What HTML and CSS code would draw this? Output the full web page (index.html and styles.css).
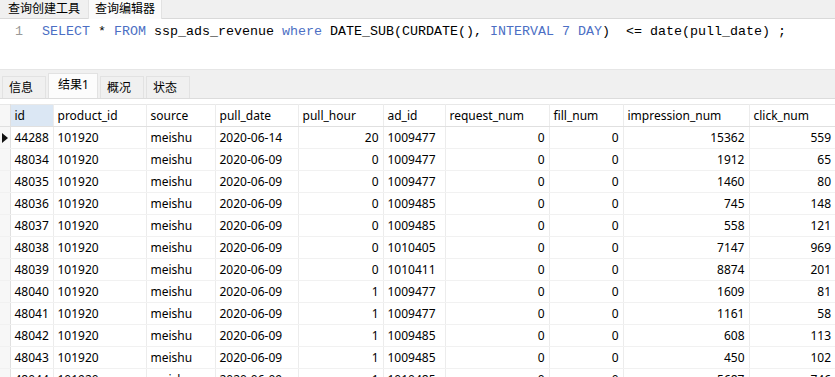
FILE: index.html
```html
<!DOCTYPE html>
<html lang="zh-CN">
<head>
  <meta charset="UTF-8" />
  <title>查询编辑器</title>
  <link rel="stylesheet" href="styles.css">
</head>
<body>

  <!-- top tabs -->
  <div class="top-tabs">
    <div class="tab">查询创建工具</div>
    <div class="tab active">查询编辑器</div>
  </div>

  <!-- SQL editor -->
  <div class="editor">
    <span class="line-no">1</span>
    <span class="code"><span class="kw">SELECT</span> * <span class="kw">FROM</span> ssp_ads_revenue <span class="kw">where</span> DATE_SUB(CURDATE(), <span class="kw">INTERVAL</span> <span class="kw">7</span> <span class="kw">DAY</span>)  &lt;= date(pull_date) ;</span>
  </div>

  <!-- result tabs -->
  <div class="result-tabs">
    <div class="rtab">信息</div>
    <div class="rtab active">结果1</div>
    <div class="rtab">概况</div>
    <div class="rtab">状态</div>
  </div>

  <div class="grid-wrap">
    <table class="grid">
      <colgroup>
        <col style="width:10px">
        <col style="width:43px">
        <col style="width:93px">
        <col style="width:69px">
        <col style="width:83px">
        <col style="width:85px">
        <col style="width:62px">
        <col style="width:104px">
        <col style="width:74px">
        <col style="width:126px">
        <col style="width:86px">
      </colgroup>
      <thead>
        <tr>
          <th class="ind"></th>
          <th class="sel">id</th>
          <th>product_id</th>
          <th>source</th>
          <th>pull_date</th>
          <th>pull_hour</th>
          <th>ad_id</th>
          <th>request_num</th>
          <th>fill_num</th>
          <th>impression_num</th>
          <th>click_num</th>
        </tr>
      </thead>
      <tbody id="rows"></tbody>
    </table>
  </div>

  <script>
    const data = [
      ['44288', '2020-06-14', 20, '1009477', 15362, 559],
      ['48034', '2020-06-09', 0, '1009477', 1912, 65],
      ['48035', '2020-06-09', 0, '1009477', 1460, 80],
      ['48036', '2020-06-09', 0, '1009485', 745, 148],
      ['48037', '2020-06-09', 0, '1009485', 558, 121],
      ['48038', '2020-06-09', 0, '1010405', 7147, 969],
      ['48039', '2020-06-09', 0, '1010411', 8874, 201],
      ['48040', '2020-06-09', 1, '1009477', 1609, 81],
      ['48041', '2020-06-09', 1, '1009477', 1161, 58],
      ['48042', '2020-06-09', 1, '1009485', 608, 113],
      ['48043', '2020-06-09', 1, '1009485', 450, 102],
      ['48044', '2020-06-09', 1, '1010485', 5687, 746]
    ];

    const tbody = document.getElementById('rows');
    data.forEach((r, i) => {
      const tr = document.createElement('tr');
      tr.innerHTML =
        '<td class="ind">' + (i === 0 ? '<span class="arrow"></span>' : '') + '</td>' +
        '<td>' + r[0] + '</td>' +
        '<td>101920</td>' +
        '<td>meishu</td>' +
        '<td>' + r[1] + '</td>' +
        '<td class="num">' + r[2] + '</td>' +
        '<td>' + r[3] + '</td>' +
        '<td class="num">0</td>' +
        '<td class="num">0</td>' +
        '<td class="num">' + r[4] + '</td>' +
        '<td class="num">' + r[5] + '</td>';
      tbody.appendChild(tr);
    });
  </script>

</body>
</html>
```

FILE: styles.css
```css
html, body {
  margin: 0;
  padding: 0;
  height: 100%;
  overflow: hidden;
}

body {
  background-color: #ffffff;
  font-family: "Noto Sans", "Noto Sans CJK SC", sans-serif;
  font-size: 12px;
  color: #000;
}

.top-tabs {
  display: flex;
  height: 18px;
  background-color: #f0f0f0;
  border-bottom: 1px solid #d9d9d9;
  padding-left: 2px;
}

.tab {
  padding: 0 6px 0 6px;
  line-height: 17px;
  font-size: 12px;
  color: #000;
}

.tab.active {
  background-color: #fbfbfb;
  margin-left: 2px;
  border-left: 1px solid #e2e2e2;
  border-right: 1px solid #e2e2e2;
  height: 19px;
}

.editor {
  height: 51px;
  display: flex;
  align-items: flex-start;
  padding-top: 5px;
  box-sizing: border-box;
  font-family: "Liberation Mono", monospace;
  font-size: 13.33px;
  line-height: 16px;
  border-bottom: 1px solid #e6e6e6;
}

.line-no {
  width: 42px;
  padding-left: 15px;
  box-sizing: border-box;
  color: #999;
}

.code {
  white-space: pre;
  color: #000;
}

.kw {
  color: #4c6fc4;
}

.result-tabs {
  display: flex;
  background-color: #f0f0f0;
  padding-top: 6px;
  height: 28px;
  box-sizing: border-box;
  padding-left: 2px;
  gap: 2px;
}

.rtab {
  width: 44px;
  height: 22px;
  line-height: 22px;
  padding-left: 6px;
  box-sizing: border-box;
  background-color: #f0f0f0;
  border: 1px solid #e2e2e2;
  border-bottom: none;
}

.rtab.active {
  background-color: #fcfcfc;
  width: 50px;
  margin-top: -3px;
  height: 25px;
  line-height: 22px;
  padding-left: 9px;
}

.grid-wrap {
  border-top: 1px solid #dcdcdc;
  padding-top: 5px;
}

.grid {
  border-collapse: collapse;
  table-layout: fixed;
  width: 835px;
}

.grid th,
.grid td {
  height: 21px;
  padding: 0 4px;
  white-space: nowrap;
  overflow: hidden;
  font-weight: normal;
  text-align: left;
  border-right: 1px solid #ececec;
  border-bottom: 1px solid #f1f1f1;
}

.grid th {
  height: 21px;
  border-bottom: 1px solid #e0e0e0;
  border-top: 1px solid #e8e8e8;
}

.grid th.sel {
  background-color: #dbe7f4;
}

.grid .ind {
  padding: 0;
  background-color: #f7f7f7;
  border-right: 1px solid #e0e0e0;
}

.grid td.num {
  text-align: right;
}

.grid tr > :last-child {
  border-right: none;
}

.arrow {
  display: block;
  width: 0;
  height: 0;
  margin-left: 2px;
  border-top: 5px solid transparent;
  border-bottom: 5px solid transparent;
  border-left: 6px solid #111;
}
```
